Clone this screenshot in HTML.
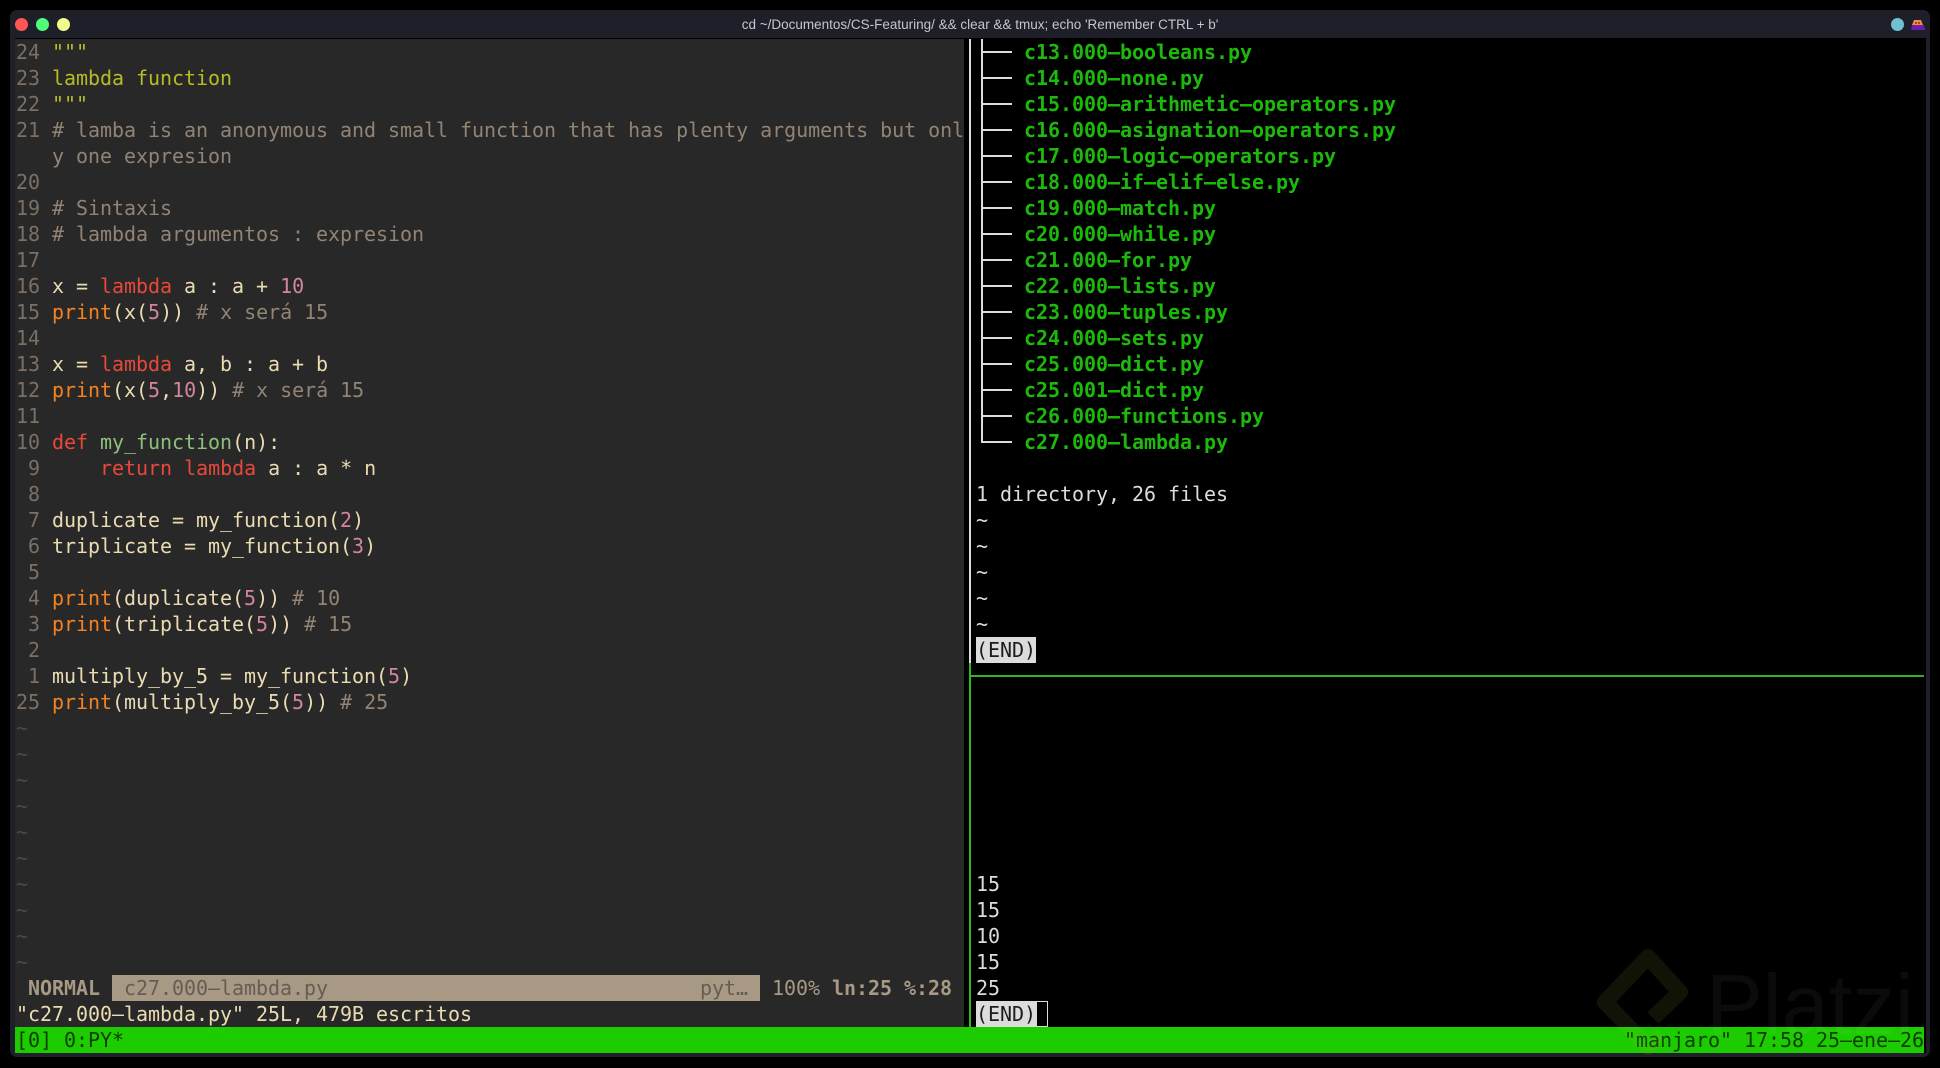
<!DOCTYPE html>
<html><head><meta charset="utf-8"><style>
html,body{margin:0;padding:0;background:#000;width:1940px;height:1068px;overflow:hidden}
.abs{position:absolute}
#frame{position:absolute;left:10px;top:10px;width:1920px;height:1047px;background:#1e1f29;border-radius:7px}
#inner{position:absolute;left:15px;top:38px;width:1911px;height:1015px;background:#000}
#left{position:absolute;left:15px;top:39px;width:949px;height:988px;background:#282828}
.t{position:absolute;left:0;white-space:pre;font:20px/26px "DejaVu Sans Mono",monospace;letter-spacing:-.04px;height:26px;filter:blur(.3px)}
.l .t{left:16px;color:#ebdbb2}
.r .t{left:976px;color:#dcdcdc}
.n{color:#7c6f64}.c{color:#928374}.y{color:#b8bb26}.k{color:#e8483a}.o{color:#f58220}.p{color:#d3869b}.g{color:#8ec07c}.d{color:#4f4843}
.r .t.f{left:1024px;font-weight:bold;color:#1db80c}
.r .t.rev{background:#dcdcdc;color:#1c1c1c}
.dot{position:absolute;width:13px;height:13px;border-radius:50%;top:18px}
#title{position:absolute;left:542px;width:876px;top:14px;text-align:center;font:13.5px/21px "Liberation Sans",sans-serif;color:#c5c6cb;white-space:pre}
</style></head><body>
<div id="frame"></div><div id="inner"></div><div id="left"></div>
<div class="dot" style="left:15px;background:#ff5555"></div>
<div class="dot" style="left:36px;background:#50fa7b"></div>
<div class="dot" style="left:57px;background:#f1fa8c"></div>
<div class="dot" style="left:1891px;background:#6fc0d2"></div>
<svg class="abs" style="left:1911px;top:19px" width="14" height="12" viewBox="0 0 14 12"><path d="M3 1h7l2 5H1z" fill="#e8923a"/><rect x="4" y="3" width="2" height="2" fill="#c0392b"/><rect x="7" y="3" width="2" height="2" fill="#c0392b"/><path d="M1 6h12l1 5H0z" fill="#6a1fb0"/></svg>
<div id="title">cd ~/Documentos/CS-Featuring/ &amp;&amp; clear &amp;&amp; tmux; echo 'Remember CTRL + b'</div>

<div class="l">
<div class="t" style="top:39px"><span class="n">24 </span><span class="y">"""</span></div>
<div class="t" style="top:65px"><span class="n">23 </span><span class="y">lambda function</span></div>
<div class="t" style="top:91px"><span class="n">22 </span><span class="y">"""</span></div>
<div class="t" style="top:117px"><span class="n">21 </span><span class="c"># lamba is an anonymous and small function that has plenty arguments but onl</span></div>
<div class="t" style="top:143px"><span class="c">   y one expresion</span></div>
<div class="t" style="top:169px"><span class="n">20</span></div>
<div class="t" style="top:195px"><span class="n">19 </span><span class="c"># Sintaxis</span></div>
<div class="t" style="top:221px"><span class="n">18 </span><span class="c"># lambda argumentos : expresion</span></div>
<div class="t" style="top:247px"><span class="n">17</span></div>
<div class="t" style="top:273px"><span class="n">16 </span>x = <span class="k">lambda</span> a : a + <span class="p">10</span></div>
<div class="t" style="top:299px"><span class="n">15 </span><span class="o">print</span>(x(<span class="p">5</span>)) <span class="c"># x será 15</span></div>
<div class="t" style="top:325px"><span class="n">14</span></div>
<div class="t" style="top:351px"><span class="n">13 </span>x = <span class="k">lambda</span> a, b : a + b</div>
<div class="t" style="top:377px"><span class="n">12 </span><span class="o">print</span>(x(<span class="p">5</span>,<span class="p">10</span>)) <span class="c"># x será 15</span></div>
<div class="t" style="top:403px"><span class="n">11</span></div>
<div class="t" style="top:429px"><span class="n">10 </span><span class="k">def</span> <span class="g">my_function</span>(n):</div>
<div class="t" style="top:455px"><span class="n"> 9 </span>    <span class="k">return</span> <span class="k">lambda</span> a : a * n</div>
<div class="t" style="top:481px"><span class="n"> 8</span></div>
<div class="t" style="top:507px"><span class="n"> 7 </span>duplicate = my_function(<span class="p">2</span>)</div>
<div class="t" style="top:533px"><span class="n"> 6 </span>triplicate = my_function(<span class="p">3</span>)</div>
<div class="t" style="top:559px"><span class="n"> 5</span></div>
<div class="t" style="top:585px"><span class="n"> 4 </span><span class="o">print</span>(duplicate(<span class="p">5</span>)) <span class="c"># 10</span></div>
<div class="t" style="top:611px"><span class="n"> 3 </span><span class="o">print</span>(triplicate(<span class="p">5</span>)) <span class="c"># 15</span></div>
<div class="t" style="top:637px"><span class="n"> 2</span></div>
<div class="t" style="top:663px"><span class="n"> 1 </span>multiply_by_5 = my_function(<span class="p">5</span>)</div>
<div class="t" style="top:689px"><span class="n">25 </span><span class="o">print</span>(multiply_by_5(<span class="p">5</span>)) <span class="c"># 25</span></div>
<div class="t" style="top:715px"><span class="d">~</span></div>
<div class="t" style="top:741px"><span class="d">~</span></div>
<div class="t" style="top:767px"><span class="d">~</span></div>
<div class="t" style="top:793px"><span class="d">~</span></div>
<div class="t" style="top:819px"><span class="d">~</span></div>
<div class="t" style="top:845px"><span class="d">~</span></div>
<div class="t" style="top:871px"><span class="d">~</span></div>
<div class="t" style="top:897px"><span class="d">~</span></div>
<div class="t" style="top:923px"><span class="d">~</span></div>
<div class="t" style="top:949px"><span class="d">~</span></div>
<div class="abs" style="left:112px;top:975px;width:648px;height:26px;background:#a89984"></div>
<div class="t" style="top:975px;left:28px;color:#a89984;font-weight:bold">NORMAL</div>
<div class="t" style="top:975px;left:124px;color:#665c54">c27.000–lambda.py</div>
<div class="t" style="top:975px;left:700px;color:#665c54">pyt…</div>
<div class="t" style="top:975px;left:772px;color:#a89984">100% <b>ln:25 %:28</b></div>
<div class="t" style="top:1001px">"c27.000–lambda.py" 25L, 479B escritos</div>
</div>

<div class="abs" style="left:969px;top:39px;width:2px;height:624px;background:#dcdcdc"></div>
<div class="abs" style="left:969px;top:663px;width:2px;height:364px;background:#2fb520"></div>
<div class="abs" style="left:971px;top:675px;width:953px;height:2px;background:#2fb520"></div>
<div class="abs" style="left:981px;top:39px;width:2px;height:404px;background:#dcdcdc"></div>
<div class="abs" style="left:981px;top:39px;width:31px;height:416px;background:repeating-linear-gradient(to bottom,transparent 0,transparent 12px,#dcdcdc 12px,#dcdcdc 14px,transparent 14px,transparent 26px)"></div>

<div class="r">
<div class="t f" style="top:39px">c13.000–booleans.py</div>
<div class="t f" style="top:65px">c14.000–none.py</div>
<div class="t f" style="top:91px">c15.000–arithmetic–operators.py</div>
<div class="t f" style="top:117px">c16.000–asignation–operators.py</div>
<div class="t f" style="top:143px">c17.000–logic–operators.py</div>
<div class="t f" style="top:169px">c18.000–if–elif–else.py</div>
<div class="t f" style="top:195px">c19.000–match.py</div>
<div class="t f" style="top:221px">c20.000–while.py</div>
<div class="t f" style="top:247px">c21.000–for.py</div>
<div class="t f" style="top:273px">c22.000–lists.py</div>
<div class="t f" style="top:299px">c23.000–tuples.py</div>
<div class="t f" style="top:325px">c24.000–sets.py</div>
<div class="t f" style="top:351px">c25.000–dict.py</div>
<div class="t f" style="top:377px">c25.001–dict.py</div>
<div class="t f" style="top:403px">c26.000–functions.py</div>
<div class="t f" style="top:429px">c27.000–lambda.py</div>
<div class="t" style="top:481px">1 directory, 26 files</div>
<div class="t" style="top:507px">~</div>
<div class="t" style="top:533px">~</div>
<div class="t" style="top:559px">~</div>
<div class="t" style="top:585px">~</div>
<div class="t" style="top:611px">~</div>
<div class="t rev" style="top:637px">(END)</div>
<div class="t" style="top:871px">15</div>
<div class="t" style="top:897px">15</div>
<div class="t" style="top:923px">10</div>
<div class="t" style="top:949px">15</div>
<div class="t" style="top:975px">25</div>
<div class="t rev" style="top:1001px">(END)</div>
<div class="abs" style="left:1036px;top:1001px;width:10px;height:24px;border:1px solid #dcdcdc"></div>
</div>

<div class="abs" style="left:15px;top:1027px;width:1909px;height:26px;background:#1ccc00"></div>
<div class="t" style="top:1027px;left:16px;color:#0a3d00">[0] 0:PY*</div>
<div class="t" style="top:1027px;left:1624px;color:#0a3d00">"manjaro" 17:58 25–ene–26</div>

<svg class="abs" style="left:1590px;top:945px" width="345" height="123" viewBox="1590 945 345 123"><path d="M1653 1018L1680 992L1648 957L1605 1002L1648 1047L1662 1034" fill="none" stroke="#a8b83c" stroke-opacity=".1" stroke-width="16" stroke-linejoin="round"/><text x="1706" y="1034" font-family="Liberation Sans" font-size="85" fill="#fff" fill-opacity=".045">Platzi</text></svg>
</body></html>
